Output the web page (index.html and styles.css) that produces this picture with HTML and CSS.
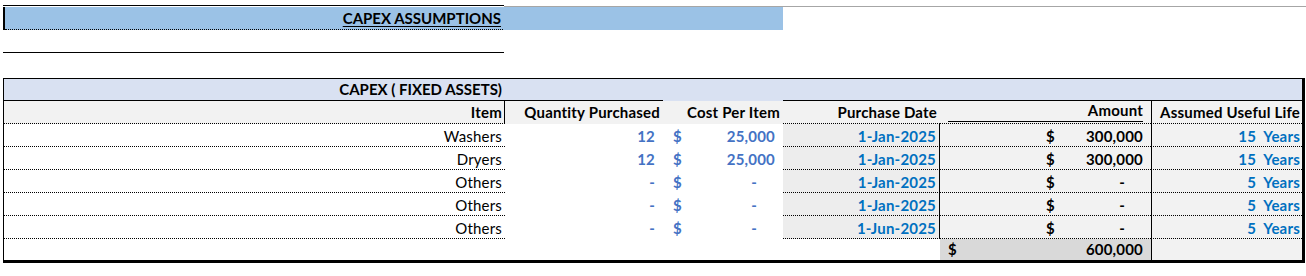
FILE: index.html
```html
<!DOCTYPE html>
<html>
<head>
<meta charset="utf-8">
<link rel="stylesheet" href="styles.css">
</head>
<body>
<div class="sheet">
  <div class="top-rule">
    <div class="top-rule-left"></div>
    <div class="top-rule-right"></div>
  </div>
  <div class="assump-band">
    <div class="assump-title"><span class="ul">CAPEX ASSUMPTIONS</span></div>
  </div>
  <div class="mid-rule"></div>

  <div class="box">
    <div class="grid">
      <div class="c title span2 bline">CAPEX ( FIXED ASSETS)</div>
      <div class="c title"></div>
      <div class="c title span3 bline"></div>

      <div class="c hdr dot itemhdr">Item</div>
      <div class="c hdr">Quantity Purchased</div>
      <div class="c hdr">Cost Per Item</div>
      <div class="c hdr dot">Purchase Date</div>
      <div class="c hdr dot amthdr"><span class="amt-ul">Amount</span></div>
      <div class="c hdr dot lifecol">Assumed Useful Life</div>

      <div class="c item dot">Washers</div>
      <div class="c qty">12</div>
      <div class="c cost"><span>$</span><span>25,000</span></div>
      <div class="c date dot">1-Jan-2025</div>
      <div class="c amt dot"><span>$</span><span>300,000</span></div>
      <div class="c life dot lifecol">15&nbsp; Years</div>

      <div class="c item dot">Dryers</div>
      <div class="c qty">12</div>
      <div class="c cost"><span>$</span><span>25,000</span></div>
      <div class="c date dot">1-Jan-2025</div>
      <div class="c amt dot"><span>$</span><span>300,000</span></div>
      <div class="c life dot lifecol">15&nbsp; Years</div>

      <div class="c item dot">Others</div>
      <div class="c qty">-</div>
      <div class="c cost"><span>$</span><span class="dash">-</span></div>
      <div class="c date dot">1-Jan-2025</div>
      <div class="c amt dot"><span>$</span><span class="dash">-</span></div>
      <div class="c life dot lifecol">5&nbsp; Years</div>

      <div class="c item dot">Others</div>
      <div class="c qty">-</div>
      <div class="c cost"><span>$</span><span class="dash">-</span></div>
      <div class="c date dot">1-Jan-2025</div>
      <div class="c amt dot"><span>$</span><span class="dash">-</span></div>
      <div class="c life dot lifecol">5&nbsp; Years</div>

      <div class="c item dot">Others</div>
      <div class="c qty">-</div>
      <div class="c cost"><span>$</span><span class="dash">-</span></div>
      <div class="c date dot">1-Jun-2025</div>
      <div class="c amt dot"><span>$</span><span class="dash">-</span></div>
      <div class="c life dot lifecol">5&nbsp; Years</div>

      <div class="c span4 blank"></div>
      <div class="c total"><span>$</span><span>600,000</span></div>
      <div class="c life lifecol"></div>
    </div>
  </div>
</div>
</body>
</html>
```

FILE: styles.css
```css
html, body {
  margin: 0;
  padding: 0;
  background: #ffffff;
}
body {
  font-family: Lato, "Open Sans", "Liberation Sans", sans-serif;
  font-size: 15px;
  letter-spacing: 0.2px;
  color: #000;
}
.sheet {
  padding-top: 5px;
}
.top-rule {
  display: flex;
  height: 2px;
}
.top-rule-left {
  width: 501px;
  margin-left: 3px;
  border-top: 1px solid #000;
}
.top-rule-right {
  flex: 1;
  border-bottom: 1px solid #a6a6a6;
}
.assump-band {
  width: 778px;
  margin-left: 3px;
  height: 23px;
  background: #9bc2e6;
  border-left: 2px solid #000;
  display: flex;
}
.assump-title {
  width: 498px;
  box-sizing: border-box;
  height: 23px;
  border-bottom: 1px dotted #000;
  text-align: right;
  font-weight: 700;
  letter-spacing: 0;
  line-height: 22px;
  padding-right: 2px;
  background: #9bc2e6;
}
.ul {
  text-decoration: underline;
  text-underline-offset: 2px;
}
.mid-rule {
  width: 501px;
  margin-left: 3px;
  margin-top: 22px;
  border-top: 1px solid #000;
}
.box {
  margin-top: 25px;
  margin-left: 3px;
  width: 1302px;
  box-sizing: border-box;
  border-top: 1px solid #000;
  border-left: 1px solid #000;
  border-right: 3px solid #000;
  border-bottom: 3px solid #000;
}
.grid {
  display: grid;
  grid-template-columns: 501px 158px 120px 157px 211px 151px;
  grid-template-rows: 22px repeat(6, 23px) 21px;
}
.c {
  box-sizing: border-box;
  height: 100%;
  line-height: 23px;
  padding-top: 1px;
  text-align: right;
  white-space: nowrap;
  overflow: hidden;
}
.span2 { grid-column: span 2; }
.span3 { grid-column: span 3; }
.span4 { grid-column: span 4; }
.title {
  background: #d9e1f2;
  font-weight: 700;
  letter-spacing: 0;
  line-height: 20px;
  padding-top: 0;
  padding-right: 3px;
}
.title.span2 {
  padding-right: 161px;
}
.bline {
  border-bottom: 1px solid #000;
}
.hdr {
  background: #f2f2f2;
  font-weight: 700;
  padding-top: 0;
  padding-right: 3px;
}
.dot {
  border-bottom: 1px dotted #000;
}
.itemhdr {
  border-right: 1px solid #000;
  padding-right: 2px;
}
.amthdr {
  padding: 0 8px 0 8px;
  line-height: 19px;
}
.amt-ul {
  display: block;
  border-bottom: 1px solid #000;
  height: 20px;
}
.lifecol {
  border-left: 1px solid #000;
  padding-right: 2px;
}
.item {
  padding-right: 3px;
  font-weight: 400;
}
.qty {
  color: #4472c4;
  font-weight: 700;
  padding-right: 8px;
}
.cost {
  color: #4472c4;
  font-weight: 700;
  display: flex;
  justify-content: space-between;
  padding: 1px 8px 0 10px;
}
.dash {
  padding-right: 18px;
}
.date {
  background: #ededed;
  color: #0070c0;
  font-weight: 700;
  padding-right: 3px;
  border-right: 1px solid #000;
}
.amt {
  background: #f2f2f2;
  font-weight: 700;
  display: flex;
  justify-content: space-between;
  padding: 1px 8px 0 106px;
}
.amt .dash {
  padding-right: 18px;
}
.life {
  background: #f2f2f2;
  color: #0070c0;
  font-weight: 700;
}
.blank {
  background: #fff;
}
.total {
  background: #d9d9d9;
  font-weight: 700;
  display: flex;
  justify-content: space-between;
  padding: 0 8px 0 8px;
  line-height: 21px;
}
```
